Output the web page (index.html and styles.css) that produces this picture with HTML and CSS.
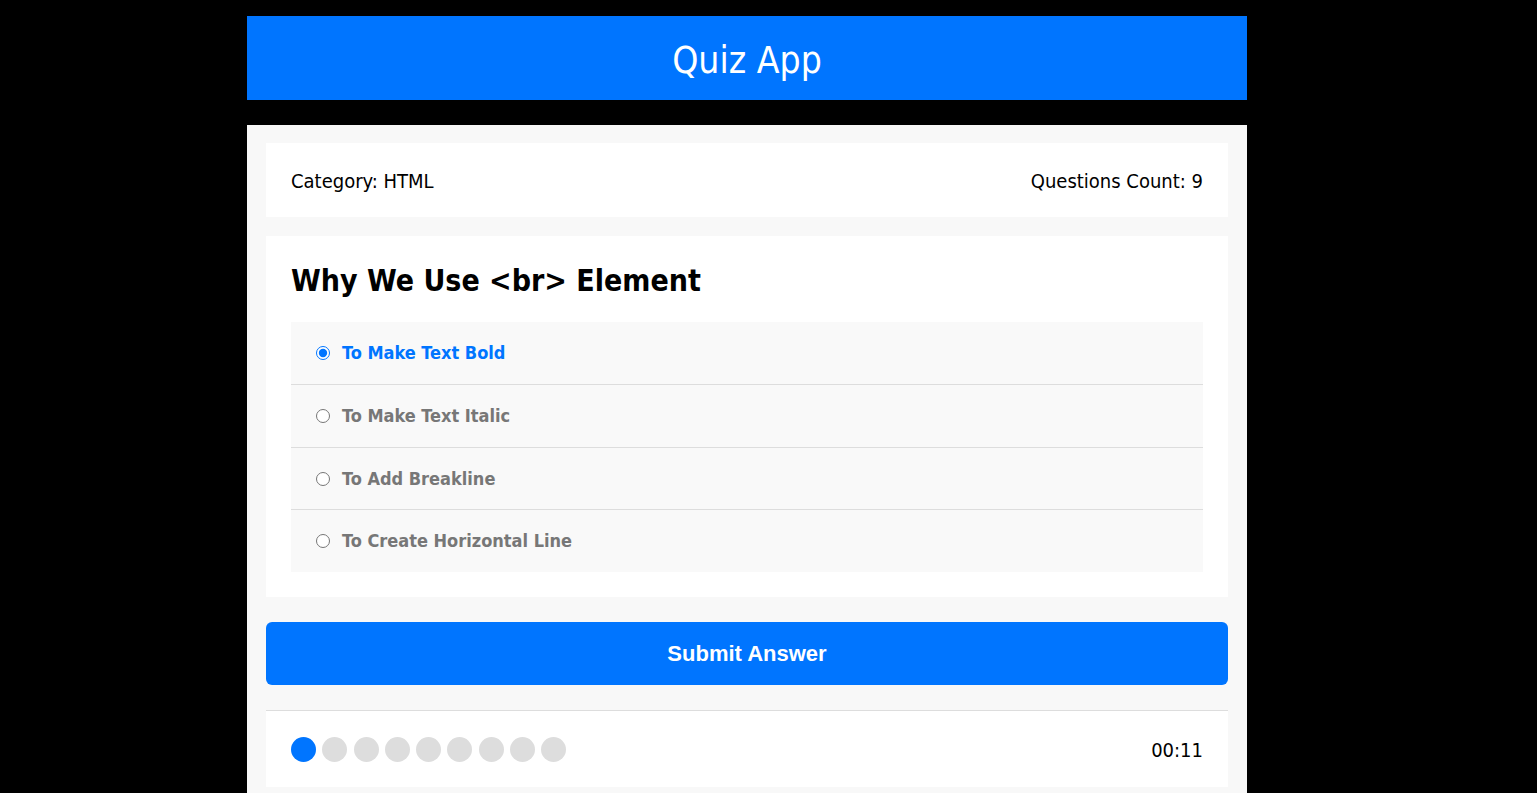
FILE: index.html
```html
<!DOCTYPE html>
<html lang="en">
<head>
<meta charset="utf-8">
<title>Quiz App</title>
<link rel="stylesheet" href="styles.css">
</head>
<body>
  <div class="app">
    <header class="app-header">Quiz App</header>
    <main class="quiz">
      <div class="info">
        <div class="category">Category: <span>HTML</span></div>
        <div class="count">Questions Count: <span>9</span></div>
      </div>
      <section class="question-area">
        <h2 class="question-title">Why We Use &lt;br&gt; Element</h2>
        <div class="answers">
          <div class="answer">
            <input type="radio" name="q" id="a1" checked>
            <label for="a1">To Make Text Bold</label>
          </div>
          <div class="answer">
            <input type="radio" name="q" id="a2">
            <label for="a2">To Make Text Italic</label>
          </div>
          <div class="answer">
            <input type="radio" name="q" id="a3">
            <label for="a3">To Add Breakline</label>
          </div>
          <div class="answer">
            <input type="radio" name="q" id="a4">
            <label for="a4">To Create Horizontal Line</label>
          </div>
        </div>
      </section>
      <button class="submit" type="button">Submit Answer</button>
      <div class="bullets">
        <div class="spans">
          <span class="on"></span><span></span><span></span><span></span><span></span><span></span><span></span><span></span><span></span>
        </div>
        <div class="countdown">00:11</div>
      </div>
    </main>
  </div>
</body>
</html>
```

FILE: styles.css
```css
html, body {
  margin: 0;
  padding: 0;
  background: #000;
}
body {
  font-family: "DejaVu Sans Condensed", "DejaVu Sans", sans-serif;
}
.app {
  width: 1000px;
  margin: 16px 0 0 247px;
}
.app-header {
  background: #0075ff;
  color: #fff;
  height: 84px;
  box-sizing: border-box;
  padding-top: 4px;
  display: flex;
  align-items: center;
  justify-content: center;
  font-size: 37px;
}
.quiz {
  margin-top: 25px;
  background: #f8f8f8;
  padding: 18px 19px 20px;
}
.info {
  background: #fff;
  padding: 26px 25px 24px;
  display: flex;
  justify-content: space-between;
  font-size: 20px;
  line-height: 24px;
  color: #000;
}
.question-area {
  background: #fff;
  margin-top: 19px;
  padding: 25px;
}
.question-title {
  margin: 2px 0 23px;
  font-size: 30px;
  line-height: 36px;
  font-weight: bold;
  color: #000;
}
.answers {
  background: #f9f9f9;
}
.answer {
  display: flex;
  align-items: center;
  padding: 20px;
  border-bottom: 1px solid #ddd;
}
.answer:nth-child(-n+2) {
  padding-bottom: 21px;
}
.answer:last-child {
  border-bottom: none;
  padding-bottom: 21px;
}
.answer input {
  margin: 0 3px 0 5px;
  width: 14px;
  height: 14px;
  accent-color: #0075ff;
}
.answer label {
  margin-left: 9px;
  font-size: 18px;
  line-height: 21px;
  font-weight: bold;
  color: #777;
}
.answer input:checked + label {
  color: #0075ff;
}
.submit {
  display: block;
  width: 100%;
  margin-top: 25px;
  height: 63px;
  border: none;
  border-radius: 6px;
  background: #0075ff;
  color: #fff;
  font-family: "Liberation Sans", Arial, sans-serif;
  font-size: 22px;
  font-weight: bold;
}
.bullets {
  margin-top: 25px;
  border-top: 1px solid #ddd;
  background: #fff;
  padding: 26px 25px 25px;
  display: flex;
  justify-content: space-between;
  align-items: center;
}
.spans {
  display: flex;
  gap: 6.25px;
}
.spans span {
  width: 25px;
  height: 25px;
  border-radius: 50%;
  background: #ddd;
}
.spans span.on {
  background: #0075ff;
}
.countdown {
  font-size: 20px;
  color: #000;
}
```
